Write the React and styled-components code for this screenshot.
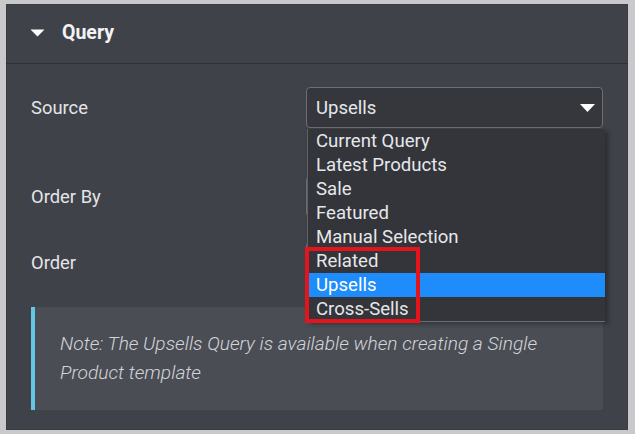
import React from "react";
import styled, { createGlobalStyle } from "styled-components";

const GlobalStyle = createGlobalStyle`
  html, body { margin: 0; padding: 0; background: #c9c9cb; }
  body { font-family: Roboto, "Liberation Sans", sans-serif; }
  * { box-sizing: border-box; }
`;

const Frame = styled.div`
  width: 635px;
  height: 434px;
  padding: 4px 7px 4px 6px;
`;

const Panel = styled.section`
  height: 426px;
  background: #404249;
  display: flex;
  flex-direction: column;
  box-shadow: inset 0 0 0 1px #3a3c42;
`;

const Header = styled.header`
  height: 60px;
  flex: none;
  display: flex;
  align-items: center;
  gap: 17px;
  padding: 0 0 2px 24px;
  border-bottom: 1px solid #2f3136;
`;

const Caret = styled.svg`
  width: 15px;
  height: 8px;
  display: block;
  fill: #ffffff;
`;

const Title = styled.h2`
  margin: 0;
  font-size: 19.5px;
  font-weight: 700;
  color: #f2f3f5;
`;

const Body = styled.div`
  flex: 1;
  padding: 23px 25px 20px 25px;
  display: flex;
  flex-direction: column;
`;

const Row = styled.div`
  display: grid;
  grid-template-columns: 1fr 297px;
  align-items: center;
  height: 41px;
  margin-top: ${(p) => p.$gap || 0}px;
`;

const Label = styled.span`
  font-size: 18.4px;
  color: #e4e5e8;
`;

const SelectWrap = styled.div`
  position: relative;
  height: 41px;
`;

const SelectBox = styled.div`
  height: 41px;
  border: 1px solid #6c6f75;
  border-radius: 4px;
  background: #35373c;
  display: flex;
  align-items: center;
  justify-content: space-between;
  padding: 0 7px 0 9px;
  font-size: 18.5px;
  color: #e6e7ea;
`;

const Arrow = styled.svg`
  width: 15px;
  height: 8px;
  display: block;
  margin-left: auto;
  fill: #ffffff;
`;

const Dropdown = styled.ul`
  position: absolute;
  z-index: 5;
  top: 42px;
  left: 1px;
  width: 298px;
  margin: 0;
  padding: 0;
  list-style: none;
  background: #33353a;
  border-left: 1px solid #5e6167;
  border-bottom: 1px solid #6a6c72;
  box-shadow: 3px 2px 5px rgba(0, 0, 0, 0.35);
`;

const Option = styled.li`
  height: 24px;
  line-height: 24px;
  padding-left: 8px;
  font-size: 18.6px;
  color: ${(p) => (p.$active ? "#ffffff" : "#e6e7ea")};
  background: ${(p) => (p.$active ? "#1f8cfb" : "transparent")};
  white-space: nowrap;
`;

const Highlight = styled.div`
  position: absolute;
  z-index: 6;
  left: -3px;
  top: 118px;
  width: 115px;
  height: 76px;
  border: 4px solid #e3141b;
  pointer-events: none;
`;

const Note = styled.div`
  margin-top: 24px;
  height: 103px;
  background: #4b4d55;
  border-left: 4px solid #64c6e6;
  border-radius: 0 3px 3px 0;
  padding: 22px 20px 0 25px;
  font-size: 19.2px;
  line-height: 29px;
  font-style: italic;
  font-weight: 300;
  color: #d3d5d9;
`;

const options = [
  "Current Query",
  "Latest Products",
  "Sale",
  "Featured",
  "Manual Selection",
  "Related",
  "Upsells",
  "Cross-Sells",
];

function DownArrow() {
  return (
    <Arrow viewBox="0 0 15 8">
      <path d="M0 0 H15 L7.5 8 Z" />
    </Arrow>
  );
}

export default function App() {
  return (
    <>
      <GlobalStyle />
      <Frame>
        <Panel>
          <Header>
            <Caret viewBox="0 0 15 8">
              <path d="M0.5 0.5 H14.5 L7.5 7.5 Z" />
            </Caret>
            <Title>Query</Title>
          </Header>
          <Body>
            <Row>
              <Label>Source</Label>
              <SelectWrap>
                <SelectBox>
                  <span>Upsells</span>
                  <DownArrow />
                </SelectBox>
                <Dropdown>
                  {options.map((o) => (
                    <Option key={o} $active={o === "Upsells"}>
                      {o}
                    </Option>
                  ))}
                  <Highlight />
                </Dropdown>
              </SelectWrap>
            </Row>
            <Row $gap={48}>
              <Label>Order By</Label>
              <SelectWrap>
                <SelectBox>
                  <DownArrow />
                </SelectBox>
              </SelectWrap>
            </Row>
            <Row $gap={25}>
              <Label>Order</Label>
              <SelectWrap>
                <SelectBox>
                  <DownArrow />
                </SelectBox>
              </SelectWrap>
            </Row>
            <Note>
              Note: The Upsells Query is available when creating a Single
              Product template
            </Note>
          </Body>
        </Panel>
      </Frame>
    </>
  );
}
